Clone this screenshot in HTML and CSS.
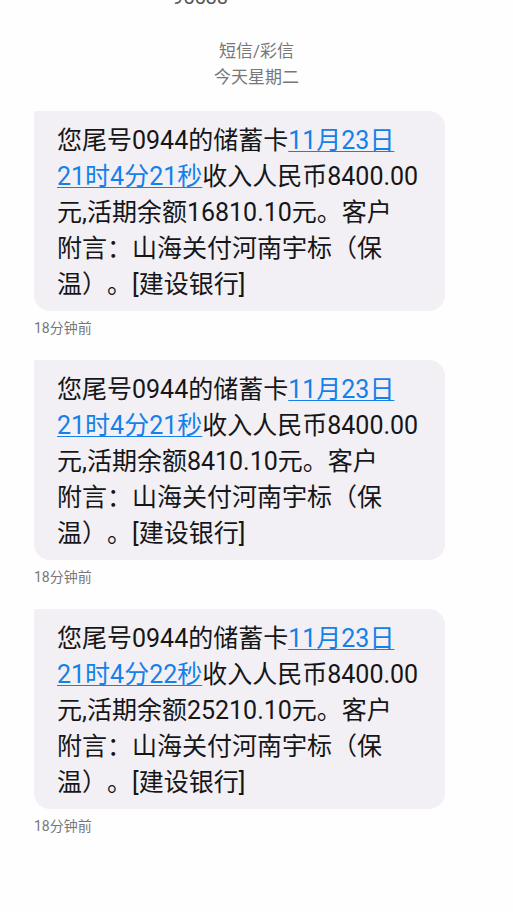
FILE: index.html
```html
<!DOCTYPE html>
<html lang="zh-CN">
<head>
    <meta charset="UTF-8">
    <meta name="viewport" content="width=device-width, initial-scale=1.0">
    <title>95533</title>
    <link rel="stylesheet" href="styles.css">
</head>
<body>
    <!-- Header, partly scrolled out of view -->
    <header class="header">
        <h1>95533</h1>
    </header>

    <!-- Conversation -->
    <main class="conversation">
        <div class="thread-info">
            <p>短信/彩信</p>
            <p>今天星期二</p>
        </div>

        <article class="message">
            <p class="bubble">您尾号0944的储蓄卡<a href="#">11月23日<br>21时4分21秒</a>收入人民币8400.00<br>元,活期余额16810.10元。客户<br>附言：山海关付河南宇标（保<br>温）。[建设银行]</p>
            <span class="time">18分钟前</span>
        </article>

        <article class="message">
            <p class="bubble">您尾号0944的储蓄卡<a href="#">11月23日<br>21时4分21秒</a>收入人民币8400.00<br>元,活期余额8410.10元。客户<br>附言：山海关付河南宇标（保<br>温）。[建设银行]</p>
            <span class="time">18分钟前</span>
        </article>

        <article class="message">
            <p class="bubble">您尾号0944的储蓄卡<a href="#">11月23日<br>21时4分22秒</a>收入人民币8400.00<br>元,活期余额25210.10元。客户<br>附言：山海关付河南宇标（保<br>温）。[建设银行]</p>
            <span class="time">18分钟前</span>
        </article>
    </main>
</body>
</html>
```
FILE: styles.css
```css
body {
    font-family: Roboto, "Noto Sans CJK SC", sans-serif;
    background-color: #fefefe;
    color: #161618;
    margin: 0;
}

/* Header */
.header {
    height: 7px;
    overflow: hidden;
    display: flex;
    align-items: flex-end;
    padding-left: 172px;
}

.header h1 {
    margin: 0;
    font-size: 20px;
    font-weight: normal;
    line-height: 20px;
    color: #555;
}

/* Conversation */
.conversation {
    padding: 31px 68px 30px 34px;
}

.thread-info {
    margin-right: -34px;
    margin-bottom: 21px;
    text-align: center;
    font-size: 17px;
    line-height: 26px;
    color: #77777a;
}

.thread-info p {
    margin: 0;
}

.message {
    margin-bottom: 19px;
}

.bubble {
    margin: 0;
    padding: 12px 20px 8px 23px;
    border-radius: 2px 16px 16px 16px;
    background-color: #f2f0f4;
    font-size: 25px;
    line-height: 36px;
    white-space: nowrap;
    text-spacing-trim: space-all;
}

.bubble a {
    color: #1480ea;
    text-decoration: underline;
    text-decoration-thickness: 1px;
    text-underline-offset: 2px;
    text-decoration-skip-ink: none;
}

.time {
    display: block;
    margin-top: 4px;
    font-size: 14px;
    line-height: 26px;
    color: #77777a;
}
```
